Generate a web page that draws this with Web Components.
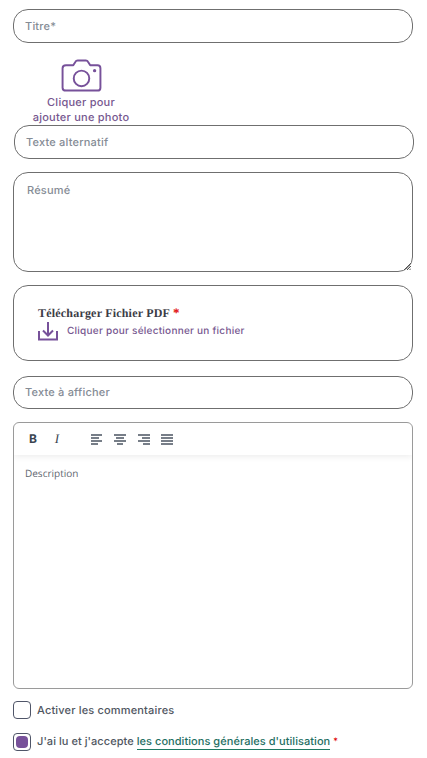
<!DOCTYPE html>
<html lang="fr">
<head>
<meta charset="utf-8">
<title>Formulaire</title>
<style>
  html, body { margin: 0; background: #fff; }
  body { width: 427px; height: 758px; overflow: hidden; font-family: "Inter", "Open Sans", sans-serif; text-rendering: geometricPrecision; }
</style>
</head>
<body>
<article-form></article-form>

<script>
const FONT = `"Inter", "Open Sans", sans-serif`;

class TextField extends HTMLElement {
    constructor() {
        super();
        this.shadow = this.attachShadow({mode: 'open'});
        this.render();
    }
    render() {
        this.shadow.innerHTML = `
        <style>
            :host{
                display:flex;
                align-items:center;
                box-sizing:border-box;
                width:400px;
                height:var(--h, 34px);
                padding:0 11px var(--pb, 0);
                border:1px solid #6f6f6f;
                border-radius:15px;
                background:#fff;
                color:#858c95;
                font:500 11px/14px ${FONT};
                letter-spacing:.2px;
            }
        </style>
        <slot></slot>`;
    }
}

class SummaryField extends HTMLElement {
    constructor() {
        super();
        this.shadow = this.attachShadow({mode: 'open'});
        this.render();
    }
    render() {
        this.shadow.innerHTML = `
        <style>
            :host{
                display:block;
                position:relative;
                box-sizing:border-box;
                width:400px;
                height:100px;
                padding:10px 13px;
                border:1px solid #6f6f6f;
                border-radius:15px;
                color:#858c95;
                font:500 11px/14px ${FONT};
                letter-spacing:.2px;
            }
            svg{ position:absolute; right:1px; bottom:1px; }
        </style>
        <slot></slot>
        <svg width="8" height="8" viewBox="0 0 8 8" fill="none" stroke="#555" stroke-width="1">
            <path d="M1 8 8 1M4 8 8 4M6.500 8 8 6.500"/>
        </svg>`;
    }
}

class PhotoPicker extends HTMLElement {
    constructor() {
        super();
        this.shadow = this.attachShadow({mode: 'open'});
        this.render();
    }
    render() {
        this.shadow.innerHTML = `
        <style>
            :host{
                display:flex;
                flex-direction:column;
                align-items:center;
                width:136px;
                color:#76578f;
                font:500 11px/15px ${FONT};
                letter-spacing:.24px;
                text-align:center;
            }
            svg{ display:block; margin-bottom:3px; }
        </style>
        <svg width="41" height="33" viewBox="0 0 42 34" fill="none" stroke="#77519a" stroke-width="2" stroke-linejoin="round">
            <path d="M5 6.500H12.500L15 2.500Q15.500 1.500 17 1.500H25.500Q27 1.500 27.500 2.500L30 6.500H37.500Q40.500 6.500 40.500 9.500V29.500Q40.500 32.500 37.500 32.500H5Q1.500 32.500 1.500 29.500V9.500Q1.500 6.500 5 6.500Z"/>
            <circle cx="21" cy="20" r="8"/>
            <circle cx="34.500" cy="12" r="1.700" fill="#77519a" stroke="none"/>
        </svg>
        <slot></slot>`;
    }
}

class FileDrop extends HTMLElement {
    constructor() {
        super();
        this.shadow = this.attachShadow({mode: 'open'});
        this.render();
    }
    render() {
        this.shadow.innerHTML = `
        <style>
            :host{
                display:block;
                box-sizing:border-box;
                width:400px;
                height:76px;
                padding:20px 24px;
                border:1px solid #6f6f6f;
                border-radius:15px;
            }
            .title{
                color:#3c3c46;
                font:bold 12px/14px "Liberation Serif", serif;
                letter-spacing:.2px;
            }
            .title b{ color:#e00000; font-size:13px; line-height:10px; }
            .row{
                display:flex;
                align-items:center;
                gap:9px;
                margin-top:1px;
                color:#76578f;
                font:500 10px/14px ${FONT};
                letter-spacing:.25px;
            }
        </style>
        <div class="title">Télécharger Fichier PDF <b>*</b></div>
        <div class="row">
            <svg width="20" height="20" viewBox="0 0 20 20" fill="none" stroke="#77519a" stroke-width="2">
                <path d="M1 10V18.500H19V10M10 1V14M5 9.500 10 14.500 15 9.500"/>
            </svg>
            <slot></slot>
        </div>`;
    }
}

class RichEditor extends HTMLElement {
    constructor() {
        super();
        this.shadow = this.attachShadow({mode: 'open'});
        this.render();
    }
    lines(rows) {
        return `<svg width="12" height="11" viewBox="0 0 12 11" stroke="#4a5360" stroke-width="1.300">
            ${rows.map((r, i) => `<path d="M${r[0]} ${1 + i * 3}H${r[1]}"/>`).join('')}
        </svg>`;
    }
    render() {
        this.shadow.innerHTML = `
        <style>
            :host{
                display:flex;
                flex-direction:column;
                box-sizing:border-box;
                width:400px;
                height:267px;
                border:1px solid #9a9a9a;
                border-radius:6px;
                overflow:hidden;
            }
            .bar{
                display:flex;
                align-items:center;
                height:32px;
                flex:none;
                padding-left:15px;
                box-shadow:0 2px 6px rgba(0,0,0,.07);
                color:#3a4450;
            }
            .b{ font:bold 12px/14px ${FONT}; width:10px; }
            .i{ font:italic 13px/14px "Liberation Serif", serif; width:8px; margin-left:14px; text-align:center; }
            .align{ display:flex; gap:11.400px; margin-left:30px; }
            svg{ display:block; }
            .body{
                padding:11px 11px;
                color:#5f6770;
                font:400 10px/14px "Open Sans", sans-serif;
            }
        </style>
        <div class="bar">
            <span class="b">B</span>
            <span class="i">I</span>
            <div class="align">
                ${this.lines([[0,11],[0,8],[0,11],[0,7]])}
                ${this.lines([[0,12],[2,10],[0,12],[3,9]])}
                ${this.lines([[0,12],[4,12],[0,12],[5,12]])}
                ${this.lines([[0,12],[0,12],[0,12],[0,12]])}
            </div>
        </div>
        <div class="body"><slot></slot></div>`;
    }
}

class CheckRow extends HTMLElement {
    constructor() {
        super();
        this.shadow = this.attachShadow({mode: 'open'});
        this.render();
    }
    render() {
        const checked = this.hasAttribute('checked');
        this.shadow.innerHTML = `
        <style>
            :host{
                display:flex;
                align-items:center;
                gap:6px;
                color:#50565f;
                font:500 11px/18px ${FONT};
                letter-spacing:var(--track, .17px);
            }
            .box{
                display:flex;
                align-items:center;
                justify-content:center;
                box-sizing:border-box;
                width:18px;
                height:18px;
                border:1.500px solid #4f5568;
                border-radius:4px;
            }
            .dot{
                width:12px;
                height:12px;
                border-radius:4px;
                background:#77519a;
            }
        </style>
        <span class="box">${checked ? '<span class="dot"></span>' : ''}</span>
        <span><slot></slot></span>`;
    }
}

class ArticleForm extends HTMLElement {
    constructor() {
        super();
        this.shadow = this.attachShadow({mode: 'open'});
        this.render();
    }
    render() {
        this.shadow.innerHTML = `
        <style>
            :host{
                display:flex;
                flex-direction:column;
                align-items:flex-start;
                box-sizing:border-box;
                width:427px;
                padding:9px 0 0 13px;
            }
            photo-picker{ margin:16px 0 0; }
            .alt{ margin:0 0 0 1px; }
            summary-field{ margin-top:13px; }
            file-drop{ margin-top:13px; }
            .display{ margin-top:15px; --h:33px; --pb:2px; }
            rich-editor{ margin-top:13px; }
            .c1{ margin-top:12px; }
            .c2{ margin-top:13px; --track:.05px; }
            a{
                color:#1f6f63;
                text-decoration:none;
                border-bottom:1px solid #1f7a63;
                padding-bottom:1px;
            }
            i{ color:#e00000; font-style:normal; font-size:9px; vertical-align:1px; }
        </style>
        <text-field>Titre*</text-field>
        <photo-picker>Cliquer pour<br>ajouter une photo</photo-picker>
        <text-field class="alt">Texte alternatif</text-field>
        <summary-field>Résumé</summary-field>
        <file-drop>Cliquer pour sélectionner un fichier</file-drop>
        <text-field class="display">Texte à afficher</text-field>
        <rich-editor>Description</rich-editor>
        <check-row class="c1">Activer les commentaires</check-row>
        <check-row class="c2" checked>J'ai lu et j'accepte <a>les conditions générales d'utilisation</a> <i>*</i></check-row>`;
    }
}

customElements.define('text-field', TextField);
customElements.define('summary-field', SummaryField);
customElements.define('photo-picker', PhotoPicker);
customElements.define('file-drop', FileDrop);
customElements.define('rich-editor', RichEditor);
customElements.define('check-row', CheckRow);
customElements.define('article-form', ArticleForm);
</script>
</body>
</html>
